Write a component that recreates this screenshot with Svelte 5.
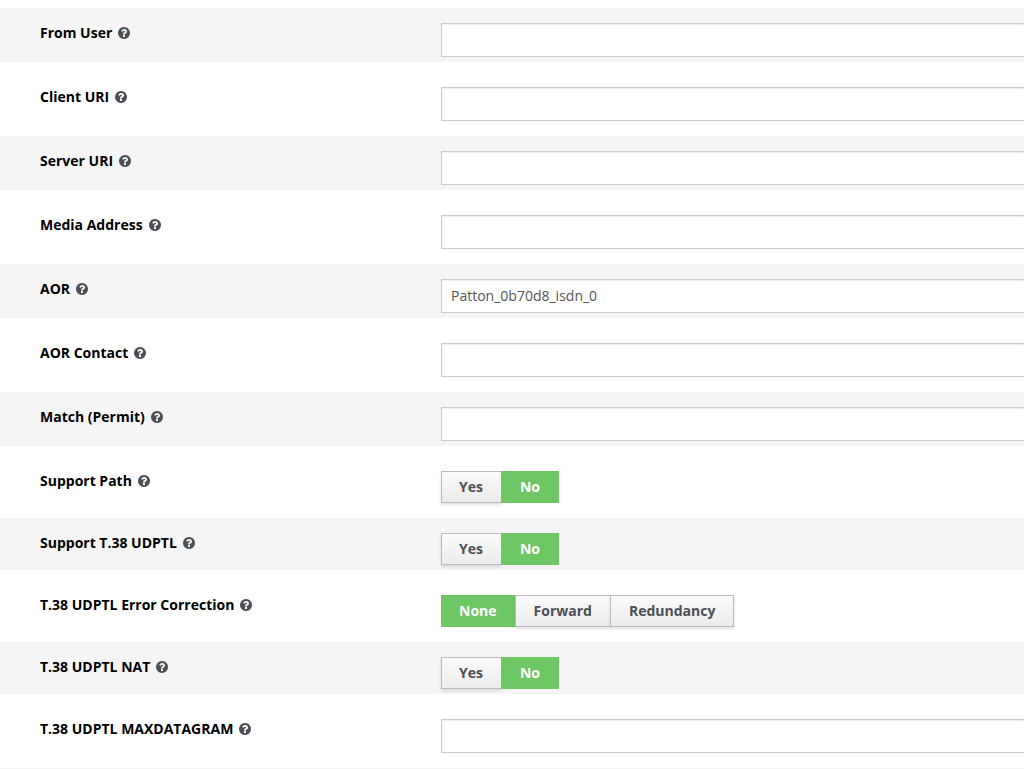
<script lang="ts">
  type Field = {
    id: string;
    label: string;
    value: string;
    options?: string[];
  };

  const yesNo = ['Yes', 'No'];

  let fields: Field[] = $state([
    { id: 'from_user', label: 'From User', value: '' },
    { id: 'client_uri', label: 'Client URI', value: '' },
    { id: 'server_uri', label: 'Server URI', value: '' },
    { id: 'media_address', label: 'Media Address', value: '' },
    { id: 'aor', label: 'AOR', value: 'Patton_0b70d8_isdn_0' },
    { id: 'aor_contact', label: 'AOR Contact', value: '' },
    { id: 'match', label: 'Match (Permit)', value: '' },
    { id: 'support_path', label: 'Support Path', value: 'No', options: yesNo },
    { id: 't38_udptl', label: 'Support T.38 UDPTL', value: 'No', options: yesNo },
    {
      id: 't38_udptl_ec',
      label: 'T.38 UDPTL Error Correction',
      value: 'None',
      options: ['None', 'Forward', 'Redundancy'],
    },
    { id: 't38_udptl_nat', label: 'T.38 UDPTL NAT', value: 'No', options: yesNo },
    { id: 't38_maxdatagram', label: 'T.38 UDPTL MAXDATAGRAM', value: '' },
  ]);
</script>

{#snippet helpIcon()}
  <svg class="help" viewBox="128 128 1536 1536" aria-hidden="true">
    <path
      d="M1024 1376v-192q0-14-9-23t-23-9h-192q-14 0-23 9t-9 23v192q0 14 9 23t23 9h192q14 0 23-9t9-23zm256-672q0-88-55.5-163t-138.5-116-170-41q-243 0-371 213-15 24 8 42l132 100q7 6 19 6 16 0 25-12 53-68 86-92 34-24 86-24 48 0 85.5 26t37.5 59q0 38-20 61t-68 45q-63 28-115.5 86.5t-52.5 125.5v36q0 14 9 23t23 9h192q14 0 23-9t9-23q0-19 21.5-49.5t54.5-49.5q32-18 49-28.5t46-35 44.5-48 28-60.5 12.5-81zm384 192q0 209-103 385.5t-279.5 279.5-385.5 103-385.5-103-279.5-279.5-103-385.5 103-385.5 279.5-279.5 385.5-103 385.5 103 279.5 279.5 103 385.5z"
    />
  </svg>
{/snippet}

<form class="settings">
  {#each fields as field (field.id)}
    <div class="row">
      <div class="name">
        {#if field.options}
          <span id="{field.id}-label">{field.label}</span>
        {:else}
          <label for={field.id}>{field.label}</label>
        {/if}
        {@render helpIcon()}
      </div>

      {#if field.options}
        <div class="radioset" role="radiogroup" aria-labelledby="{field.id}-label">
          {#each field.options as option}
            <label class="option">
              <input type="radio" name={field.id} value={option} bind:group={field.value} />
              <span>{option}</span>
            </label>
          {/each}
        </div>
      {:else}
        <input class="text" id={field.id} type="text" bind:value={field.value} />
      {/if}
    </div>
  {/each}
</form>

<style>
  :global(body) {
    background: #fff;
  }

  .settings {
    display: flex;
    flex-direction: column;
    gap: 10px;
    padding: 8px 0 10px;
    border-bottom: 1px solid #f5f5f5;
    font-family: 'Open Sans', 'Noto Sans', sans-serif;
    font-size: 14px;
    line-height: 20px;
  }

  .row {
    display: grid;
    grid-template-columns: 401px 1fr;
    align-items: start;
    padding: 15px 0 5px 40px;
  }

  .row:nth-child(odd) {
    background: #f5f5f5;
  }

  .name {
    display: flex;
    align-items: center;
    gap: 6px;
    color: #000;
    font-weight: 700;
  }

  .help {
    width: 12px;
    height: 12px;
    padding-bottom: 1px;
    fill: #4c5056;
  }

  .text {
    box-sizing: border-box;
    width: 100%;
    height: 34px;
    margin: 0;
    padding: 5px 9px 7px;
    border: 1px solid #ccc;
    border-right: 0;
    border-radius: 0;
    background: #fff;
    box-shadow: inset 0 1px 1px rgba(0, 0, 0, 0.075);
    color: #555;
    font: inherit;
  }

  .radioset {
    display: flex;
  }

  .option {
    position: relative;
    cursor: pointer;
  }

  .option input {
    position: absolute;
    inset: 0;
    margin: 0;
    opacity: 0;
  }

  .option span {
    display: block;
    padding: 5px 18px 5px 17px;
    border: 1px solid #bbb;
    background: linear-gradient(#fbfbfb, #ebebeb);
    box-shadow: 0 2px 3px rgba(0, 0, 0, 0.12);
    color: #4c5056;
    font-weight: 700;
  }

  /* neighbours share one border */
  .option + .option {
    margin-left: -1px;
  }

  .option + .option span {
    padding-left: 18px;
  }

  .option input:checked + span {
    border-color: #6fc665;
    background: #6fc665;
    box-shadow: none;
    color: #fff;
  }

  .option input:focus-visible + span {
    outline: 2px solid #3b7d34;
  }
</style>
